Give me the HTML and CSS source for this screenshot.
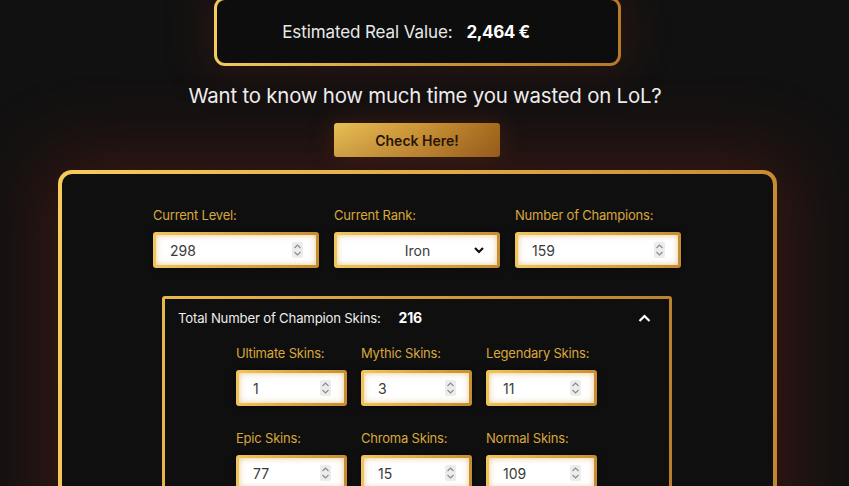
FILE: index.html
```html
<!DOCTYPE html>
<html lang="en">
<head>
  <meta charset="UTF-8">
  <meta name="viewport" content="width=device-width, initial-scale=1.0">
  <title>LoL Account Value</title>
  <link rel="stylesheet" href="styles.css">
</head>
<body>
  <div class="container">
    <div class="value-box">
      <span class="value-label">Estimated Real Value:</span>
      <span class="value-amount">2,464 €</span>
    </div>

    <h2 class="question">Want to know how much time you wasted on LoL?</h2>
    <button class="btn-check">Check Here!</button>

    <div class="card">
      <div class="fields">
        <div class="field">
          <label>Current Level:</label>
          <div class="input-wrap">
            <input type="text" value="298">
            <span class="spin"><svg viewBox="0 0 10 16"><path d="M2 6l3-3 3 3M2 10l3 3 3-3"/></svg></span>
          </div>
        </div>
        <div class="field">
          <label>Current Rank:</label>
          <div class="input-wrap select-wrap">
            <span class="select-value">Iron</span>
            <svg class="chevron" viewBox="0 0 12 12"><path d="M2 4l4 4 4-4"/></svg>
          </div>
        </div>
        <div class="field">
          <label>Number of Champions:</label>
          <div class="input-wrap">
            <input type="text" value="159">
            <span class="spin"><svg viewBox="0 0 10 16"><path d="M2 6l3-3 3 3M2 10l3 3 3-3"/></svg></span>
          </div>
        </div>
      </div>

      <div class="skins">
        <div class="skins-header">
          <span class="skins-title">Total Number of Champion Skins:</span>
          <span class="skins-total">216</span>
          <svg class="chevron-up" viewBox="0 0 13 8"><path d="M1.5 7l5-5 5 5"/></svg>
        </div>
        <div class="skins-grid">
          <div class="field">
            <label>Ultimate Skins:</label>
            <div class="input-wrap">
              <input type="text" value="1">
              <span class="spin"><svg viewBox="0 0 10 16"><path d="M2 6l3-3 3 3M2 10l3 3 3-3"/></svg></span>
            </div>
          </div>
          <div class="field">
            <label>Mythic Skins:</label>
            <div class="input-wrap">
              <input type="text" value="3">
              <span class="spin"><svg viewBox="0 0 10 16"><path d="M2 6l3-3 3 3M2 10l3 3 3-3"/></svg></span>
            </div>
          </div>
          <div class="field">
            <label>Legendary Skins:</label>
            <div class="input-wrap">
              <input type="text" value="11">
              <span class="spin"><svg viewBox="0 0 10 16"><path d="M2 6l3-3 3 3M2 10l3 3 3-3"/></svg></span>
            </div>
          </div>
          <div class="field">
            <label>Epic Skins:</label>
            <div class="input-wrap">
              <input type="text" value="77">
              <span class="spin"><svg viewBox="0 0 10 16"><path d="M2 6l3-3 3 3M2 10l3 3 3-3"/></svg></span>
            </div>
          </div>
          <div class="field">
            <label>Chroma Skins:</label>
            <div class="input-wrap">
              <input type="text" value="15">
              <span class="spin"><svg viewBox="0 0 10 16"><path d="M2 6l3-3 3 3M2 10l3 3 3-3"/></svg></span>
            </div>
          </div>
          <div class="field">
            <label>Normal Skins:</label>
            <div class="input-wrap">
              <input type="text" value="109">
              <span class="spin"><svg viewBox="0 0 10 16"><path d="M2 6l3-3 3 3M2 10l3 3 3-3"/></svg></span>
            </div>
          </div>
        </div>
      </div>
    </div>
  </div>
</body>
</html>
```

FILE: styles.css
```css
* {
  margin: 0;
  padding: 0;
  box-sizing: border-box;
}

body {
  background-color: #121111;
  color: #fff;
  font-family: 'Inter', 'Noto Sans', sans-serif;
  overflow: hidden;
}

.container {
  width: 100%;
  display: flex;
  flex-direction: column;
  align-items: center;
  padding-right: 15px;
}

.value-box {
  width: 407px;
  height: 69px;
  margin-top: -3px;
  border: 3px solid transparent;
  border-radius: 11px;
  background:
    linear-gradient(#0e0d0d, #0e0d0d) padding-box,
    linear-gradient(100deg, #f4cd60, #c99234 60%, #b7782a) border-box;
  box-shadow: 0 0 40px 6px rgba(90, 35, 25, 0.35);
  display: flex;
  justify-content: center;
  align-items: center;
  gap: 14px;
  font-size: 17px;
  letter-spacing: -0.1px;
  padding: 1px 22px 0 0;
}

.value-label {
  color: #e9e9e9;
}

.value-amount {
  font-weight: 700;
  letter-spacing: -0.4px;
}

.question {
  margin-top: 17px;
  margin-left: 16px;
  font-size: 20.4px;
  font-weight: 400;
  letter-spacing: -0.2px;
  color: #f2f2f2;
}

.btn-check {
  margin-top: 15px;
  width: 166px;
  height: 34px;
  border: none;
  border-radius: 3px;
  background: linear-gradient(100deg, #f6cf5a, #d9a43c 50%, #a9701f);
  color: #1d1408;
  font-family: inherit;
  font-size: 14px;
  font-weight: 600;
  cursor: pointer;
  box-shadow: 0 0 24px rgba(120, 50, 20, 0.4);
}

.card {
  margin-top: 13px;
  width: 719px;
  border: 4px solid transparent;
  border-radius: 14px;
  background:
    linear-gradient(#0f0f0f, #0f0f0f) padding-box,
    linear-gradient(100deg, #f7cc5a, #e0a944 50%, #c3842e) border-box;
  box-shadow: 0 0 70px 18px rgba(95, 30, 22, 0.45);
  padding: 33px 0 40px;
  display: flex;
  flex-direction: column;
  align-items: center;
}

.fields {
  display: grid;
  grid-template-columns: repeat(3, 166px);
  gap: 15px;
}

.field {
  display: flex;
  flex-direction: column;
  gap: 9px;
}

.field label {
  color: #d9a83c;
  font-size: 13px;
  line-height: 16px;
  letter-spacing: -0.2px;
}

.input-wrap {
  height: 36px;
  border: 3px solid transparent;
  border-radius: 3px;
  background:
    linear-gradient(#fff, #fff) padding-box,
    linear-gradient(100deg, #f1c65a, #c58b2f) border-box;
  box-shadow: inset 0 0 6px rgba(214, 160, 60, 0.6), 0 0 4px rgba(0, 0, 0, 0.6);
  display: flex;
  align-items: center;
  padding: 0 13px 0 14px;
}

.input-wrap input {
  flex: 1;
  min-width: 0;
  border: none;
  outline: none;
  background: transparent;
  font-family: inherit;
  font-size: 14px;
  color: #3a3a3a;
}

.spin {
  width: 11px;
  height: 16px;
  background-color: #ececec;
  border-radius: 2px;
  display: flex;
}

.spin svg {
  width: 11px;
  height: 16px;
  fill: none;
  stroke: #8a8a8a;
  stroke-width: 1.1;
}

.select-wrap {
  justify-content: center;
  position: relative;
}

.select-value {
  font-size: 14px;
  color: #3a3a3a;
}

.chevron {
  position: absolute;
  right: 12px;
  width: 12px;
  height: 12px;
  fill: none;
  stroke: #111;
  stroke-width: 2.2;
}

.skins {
  margin-top: 28px;
  width: 510px;
  border: 3px solid transparent;
  border-radius: 3px;
  background:
    linear-gradient(#0f0f0f, #0f0f0f) padding-box,
    linear-gradient(100deg, #e9b84c, #d29a3a 50%, #b97d2a) border-box;
  padding: 10px 18px 30px 13px;
}

.skins-header {
  display: flex;
  align-items: center;
  font-size: 13.2px;
  line-height: 18px;
  letter-spacing: -0.2px;
}

.skins-title {
  color: #ededed;
}

.skins-total {
  margin-left: 18px;
  font-weight: 700;
  font-size: 14px;
}

.chevron-up {
  margin-left: auto;
  width: 13px;
  height: 8px;
  fill: none;
  stroke: #fff;
  stroke-width: 2.2;
}

.skins-grid {
  margin: 18px auto 0;
  width: 361px;
  display: grid;
  grid-template-columns: repeat(3, 111px);
  column-gap: 14px;
  row-gap: 24px;
  transform: translateX(2px);
}
```
